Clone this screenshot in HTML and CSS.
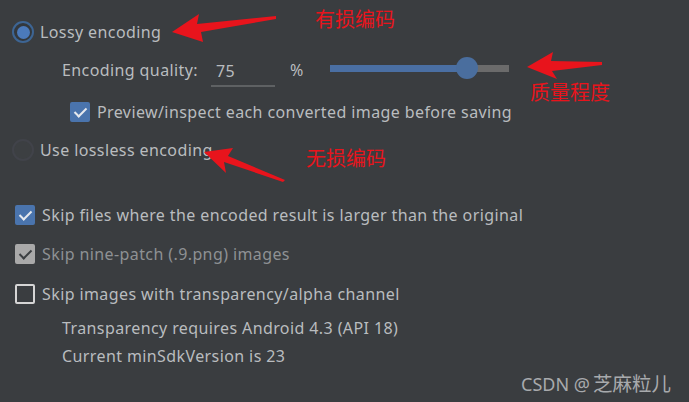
FILE: index.html
```html
<!DOCTYPE html>
<html>
<head>
<meta charset="utf-8">
<link rel="stylesheet" href="styles.css">
</head>
<body>
<div class="panel">
  <div class="row r1">
    <span class="radio on"></span>
    <span class="label">Lossy encoding</span>
  </div>
  <div class="row r2 indent">
    <span class="label qlabel">Encoding quality:</span>
    <span class="num">75</span>
    <span class="label pct">%</span>
    <div class="slider">
      <div class="fill"></div>
      <div class="thumb"></div>
    </div>
  </div>
  <div class="row r3 indent-cb">
    <span class="cb on"></span>
    <span class="label">Preview/inspect each converted image before saving</span>
  </div>
  <div class="row r4">
    <span class="radio"></span>
    <span class="label">Use lossless encoding</span>
  </div>
  <div class="row r5 left-cb">
    <span class="cb on"></span>
    <span class="label">Skip files where the encoded result is larger than the original</span>
  </div>
  <div class="row r6 left-cb">
    <span class="cb gray"></span>
    <span class="label dim">Skip nine-patch (.9.png) images</span>
  </div>
  <div class="row r7 left-cb">
    <span class="cb"></span>
    <span class="label">Skip images with transparency/alpha channel</span>
  </div>
  <div class="row r8 indent">
    <span class="label">Transparency requires Android 4.3 (API 18)</span>
  </div>
  <div class="row r9 indent">
    <span class="label">Current minSdkVersion is 23</span>
  </div>

  <svg class="arrows" width="689" height="402" viewBox="0 0 689 402">
    <polygon points="172,32 199,14 197,24 276,16 276,19 201,32 203,42" fill="#e8141c"/>
    <polygon points="527,67 553,52 551,61 602,62 602,65 552,71 557,79" fill="#e8141c"/>
    <polygon points="204,152 233,148 228,156 285,180 283,182 224,162 226,173" fill="#e8141c"/>
  </svg>
  <span class="note n1">有损编码</span>
  <span class="note n2">质量程度</span>
  <span class="note n3">无损编码</span>
  <span class="watermark"><span class="wm-latin">CSDN @</span><span class="wm-cjk">芝麻粒儿</span></span>
</div>
</body>
</html>
```

FILE: styles.css
```css
html, body {
  margin: 0;
  padding: 0;
  background: #3a3d40;
}
.panel {
  position: relative;
  width: 689px;
  height: 402px;
  overflow: hidden;
  box-sizing: border-box;
  padding-top: 20px;
  font-family: "Noto Sans", "Open Sans", sans-serif;
  font-size: 16px;
  letter-spacing: 0.4px;
  color: #b9bcbf;
}
.row {
  display: flex;
  align-items: center;
  height: 24px;
}
.r1 { padding-left: 12px; }
.r2 { margin-top: 14px; }
.r3 { margin-top: 18px; }
.r4 { margin-top: 14px; padding-left: 12px; }
.r5 { margin-top: 41px; }
.r6 { margin-top: 15px; }
.r7 { margin-top: 16px; }
.r8 { margin-top: 10px; }
.r9 { margin-top: 4px; }
.indent { padding-left: 62px; }
.indent-cb { padding-left: 70px; }
.left-cb { padding-left: 15px; }

.radio {
  width: 18px;
  height: 18px;
  border-radius: 50%;
  border: 2px solid #41434a;
  background: #3c3f42;
  margin-right: 6px;
  flex: none;
  display: flex;
  align-items: center;
  justify-content: center;
}
.radio.on {
  border-color: #3d6594;
  background: #33383d;
}
.radio.on::after {
  content: "";
  width: 13px;
  height: 13px;
  border-radius: 50%;
  background: #4b7abb;
}
.cb {
  width: 16px;
  height: 16px;
  border-radius: 2px;
  border: 2px solid #d5d5d5;
  background: #3a3d40;
  margin-right: 7px;
  flex: none;
  position: relative;
}
.cb.on {
  background: #4a74ad;
  border-color: #4a74ad;
}
.cb.gray {
  background: #a9a9a9;
  border-color: #a9a9a9;
}
.cb.on::after, .cb.gray::after {
  content: "";
  position: absolute;
  left: 5px;
  top: 1px;
  width: 5px;
  height: 10px;
  border-right: 2px solid #e6e9ee;
  border-bottom: 2px solid #e6e9ee;
  transform: rotate(45deg);
}
.cb.gray::after {
  border-color: #3c3f42;
}
.label { white-space: nowrap; }
.dim { color: #8e9194; }
.qlabel { width: 149px; flex: none; }
.num {
  width: 64px;
  flex: none;
  box-sizing: border-box;
  padding-left: 5px;
  border-bottom: 2px solid #5e6163;
  height: 27px;
  line-height: 22px;
  margin-top: 6px;
}
.pct { margin-left: 15px; width: 25px; flex: none; }
.slider {
  position: relative;
  margin-left: 15px;
  width: 179px;
  height: 7px;
  background: #6b6b6b;
  margin-top: -4px;
}
.slider .fill {
  width: 137px;
  height: 100%;
  background: #4a6fa3;
}
.slider .thumb {
  position: absolute;
  left: 126px;
  top: -8px;
  width: 22px;
  height: 22px;
  border-radius: 50%;
  background: #4a6e9e;
}
.arrows {
  position: absolute;
  left: 0;
  top: 0;
}
.note {
  position: absolute;
  font-family: "Noto Sans CJK SC", sans-serif;
  font-size: 20px;
  letter-spacing: 0;
  line-height: 1;
  color: #e8141c;
}
.n1 { left: 315px; top: 9px; }
.n2 { left: 530px; top: 82px; }
.n3 { left: 306px; top: 148px; }
.watermark {
  position: absolute;
  left: 521px;
  top: 368px;
  color: #a8aaad;
  letter-spacing: 0;
  white-space: nowrap;
}
.wm-latin {
  font-family: "Noto Sans", sans-serif;
  font-size: 18px;
  margin-right: 3px;
}
.wm-cjk {
  font-family: "Noto Sans CJK SC", sans-serif;
  font-size: 19.5px;
}
```
